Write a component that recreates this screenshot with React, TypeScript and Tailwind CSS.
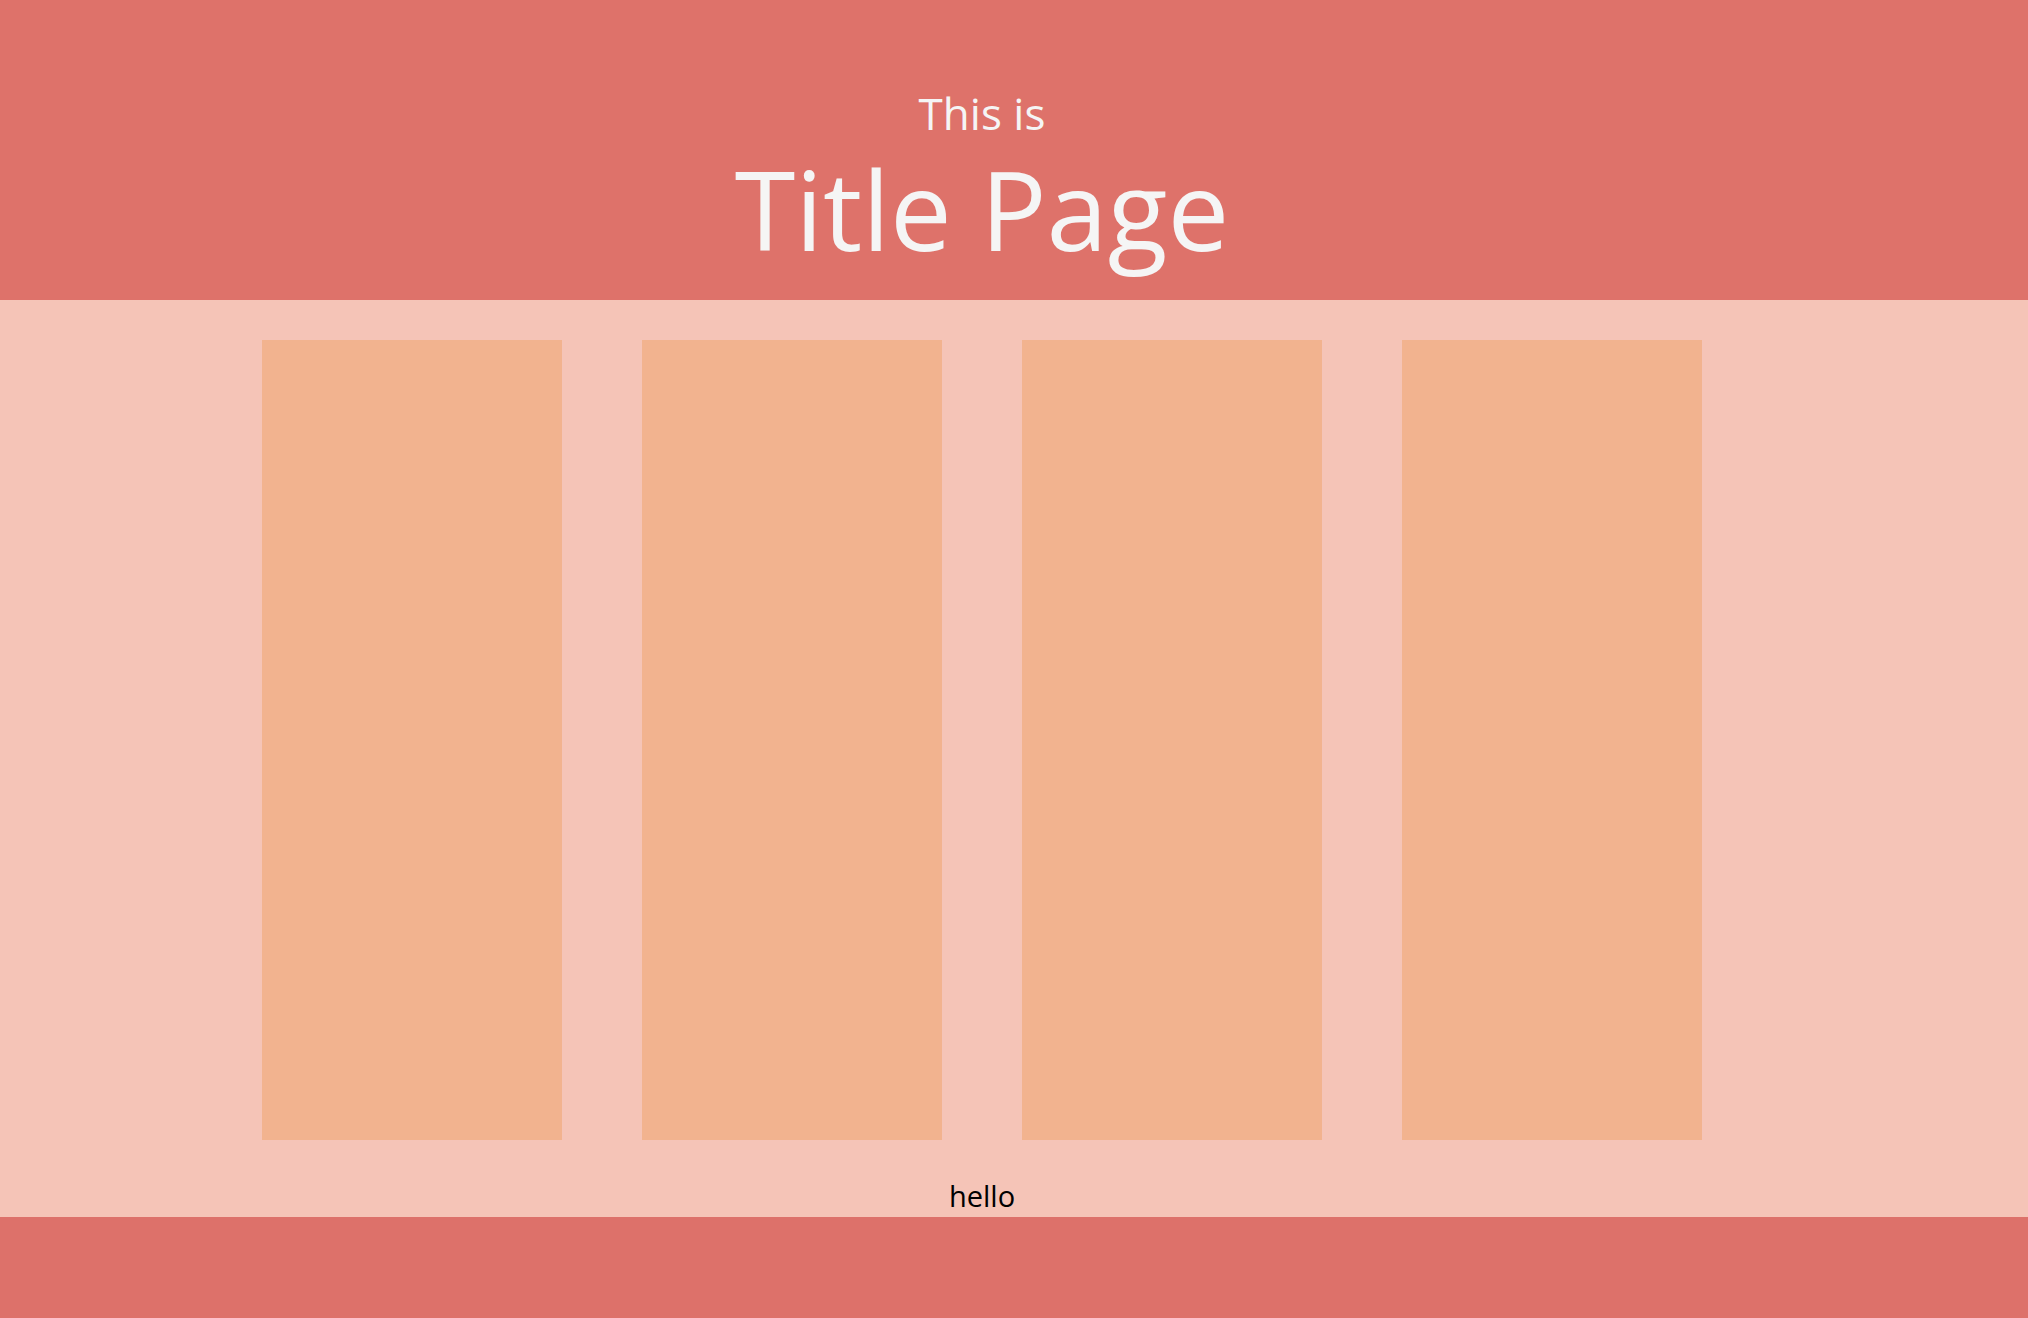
export default function App() {
  const columns = [0, 1, 2, 3];
  return (
    <div className="w-full h-[1318px] flex flex-col font-['Open_Sans',sans-serif]">
      <header className="h-[300px] bg-[#de726a] text-[#f5f5f5]">
        <div className="w-[1964px] flex flex-col items-center pt-[91px]">
          <p className="text-[44px] leading-none">This is</p>
          <h1 className="mt-[18px] text-[110px] leading-none">Title Page</h1>
        </div>
      </header>

      <main className="h-[917px] bg-[#f5c4b7]">
        <div className="w-[1964px] flex flex-col items-center pt-[40px]">
          <div className="flex gap-[80px]">
            {columns.map((c) => (
              <div key={c} className="w-[300px] h-[800px] bg-[#f2b38f]" />
            ))}
          </div>
          <p className="mt-[41px] text-[29px] leading-none text-black">hello</p>
        </div>
      </main>

      <footer className="flex-1 bg-[#dd716a]" />
    </div>
  );
}
